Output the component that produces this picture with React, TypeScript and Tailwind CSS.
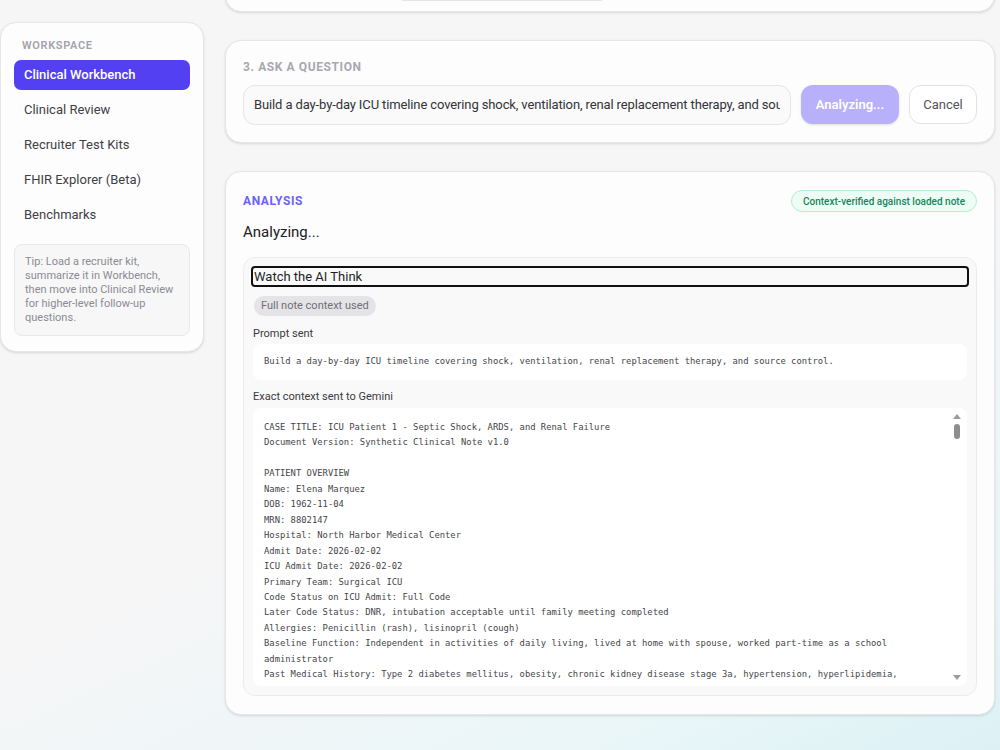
import React from 'react';

const navItems = ['Clinical Workbench', 'Clinical Review', 'Recruiter Test Kits', 'FHIR Explorer (Beta)', 'Benchmarks'];

const contextNote = `CASE TITLE: ICU Patient 1 - Septic Shock, ARDS, and Renal Failure
Document Version: Synthetic Clinical Note v1.0

PATIENT OVERVIEW
Name: Elena Marquez
DOB: 1962-11-04
MRN: 8802147
Hospital: North Harbor Medical Center
Admit Date: 2026-02-02
ICU Admit Date: 2026-02-02
Primary Team: Surgical ICU
Code Status on ICU Admit: Full Code
Later Code Status: DNR, intubation acceptable until family meeting completed
Allergies: Penicillin (rash), lisinopril (cough)
Baseline Function: Independent in activities of daily living, lived at home with spouse, worked part-time as a school administrator
Past Medical History: Type 2 diabetes mellitus, obesity, chronic kidney disease stage 3a, hypertension, hyperlipidemia,
obstructive sleep apnea on CPAP, cholecystectomy (2011)
Home Medications: Metformin 1000 mg BID, amlodipine 10 mg daily, atorvastatin 40 mg nightly

HOSPITAL COURSE
Day 1: Presented with fever, hypotension and confusion after 3 days of abdominal pain.
Day 2: Escalating vasopressor requirement, intubated for hypoxemic respiratory failure.`;

const mono = { fontFamily: '"DejaVu Sans Mono", "Liberation Mono", monospace' };

const Sidebar = () => {
  return (
    <aside className="mt-[22px] w-[204px] shrink-0 self-start rounded-[16px] border border-[#e6e6e8] bg-[#fdfdfd] px-[13px] pb-[15px] pt-[16px] shadow-sm">
      <div className="px-[8px] text-[11px] font-semibold uppercase leading-[13px] tracking-[0.06em] text-[#a3a3ab]">Workspace</div>
      <nav className="mt-[8px] flex flex-col gap-[5px]">
        {navItems.map((item, i) => (
          <div
            key={item}
            className={
              i === 0
                ? 'flex h-[30px] items-center rounded-[7px] bg-[#5240f2] px-[10px] text-[13px] font-medium text-white'
                : 'flex h-[30px] items-center rounded-[7px] px-[10px] text-[13px] text-[#3f3f46]'
            }
          >
            {item}
          </div>
        ))}
      </nav>
      <div className="mt-[14px] rounded-[8px] border border-[#e8e8ea] bg-[#f7f7f8] px-[10px] py-[10px] text-[11px] leading-[14px] text-[#8b8b92]">
        Tip: Load a recruiter kit, summarize it in Workbench, then move into Clinical Review for higher-level follow-up questions.
      </div>
    </aside>
  );
};

const Card = ({ className, children }: { className?: string; children: React.ReactNode }) => (
  <section className={`rounded-[16px] border border-[#e6e6e8] bg-[#fdfdfd] shadow-sm ${className ?? ''}`}>{children}</section>
);

// thin scrollbar look drawn over the context box
const FakeScrollbar = () => (
  <div className="pointer-events-none absolute bottom-[6px] right-[5px] top-[6px] flex w-[10px] flex-col items-center">
    <div className="h-0 w-0 border-x-[4px] border-b-[5px] border-x-transparent border-b-[#9c9c9c]" />
    <div className="mt-[5px] h-[15px] w-[6px] rounded-full bg-[#8e8e8e]" />
    <div className="flex-1" />
    <div className="h-0 w-0 border-x-[4px] border-t-[5px] border-x-transparent border-t-[#9c9c9c]" />
  </div>
);

export default function App() {
  return (
    <div
      className="flex h-[750px] gap-[21px] overflow-hidden bg-[linear-gradient(155deg,#f6f6f7_0%,#f6f6f7_55%,#e9f6f8_85%,#dcf1f5_100%)] pr-[5px] text-[#27272a]"
      style={{ fontFamily: 'Roboto, "Liberation Sans", sans-serif' }}
    >
      <Sidebar />

      <main className="flex min-w-0 flex-1 flex-col gap-[28px]">
        {/* previous step, scrolled mostly out of view */}
        <Card className="-mt-[40px] px-[18px] pb-[10px] pt-[10px]">
          <div className="flex h-[30px]">
            <div className="ml-[154px] flex w-[208px] items-end rounded-[6px] border-b border-[#e2e4e8]">
              <div className="ml-[82px] h-[2px] w-[42px] bg-[#3b82f6]" />
            </div>
          </div>
        </Card>

        <Card className="px-[17px] pb-[17px] pt-[18px]">
          <div className="text-[12px] font-bold uppercase leading-[16px] tracking-[0.05em] text-[#a8a8b0]">3. Ask a question</div>
          <div className="mt-[10px] flex gap-[10px]">
            <div className="flex h-[40px] min-w-0 flex-1 items-center rounded-[12px] border border-[#e4e4e7] bg-[#fafafa] px-[10px] text-[13px] tracking-[-0.12px] text-[#333338]">
              <span className="min-w-0 overflow-hidden whitespace-nowrap">
                Build a day-by-day ICU timeline covering shock, ventilation, renal replacement therapy, and source control.
              </span>
            </div>
            <button className="h-[39px] w-[98px] rounded-[12px] bg-[#b8b0fa] text-[13px] font-semibold text-white shadow-sm">Analyzing...</button>
            <button className="h-[39px] w-[68px] rounded-[12px] border border-[#e2e2e6] bg-white text-[13px] text-[#52525b]">Cancel</button>
          </div>
        </Card>

        <Card className="px-[17px] pb-[18px] pt-[18px]">
          <div className="flex items-center justify-between">
            <div className="text-[12px] font-bold uppercase tracking-[0.05em] text-[#6b62f4]">Analysis</div>
            <div className="flex h-[22px] items-center rounded-full border border-[#b4eed3] bg-[#edfdf5] px-[11px] text-[10px] font-medium text-[#14865c]">
              Context-verified against loaded note
            </div>
          </div>
          <div className="mt-[10px] text-[15px] leading-[20px] text-[#202024]">Analyzing...</div>

          <div className="mt-[15px] rounded-[12px] border border-[#ececee] bg-[#f9f9fa] p-[9px]">
            <div className="mt-[1px] flex h-[17px] items-center rounded-[2px] px-[1px] text-[13px] text-[#1f1f23] outline-2 outline-[#111]">
              Watch the AI Think
            </div>
            <div className="ml-[1px] mt-[11px] inline-flex h-[20px] items-center rounded-full bg-[#e4e4e7] px-[7px] text-[11px] text-[#6e6e76]">
              Full note context used
            </div>

            <div className="mt-[11px] text-[11px] leading-[14px] text-[#3a3a40]">Prompt sent</div>
            <div className="mt-[3px] flex h-[36px] items-center rounded-[8px] bg-white px-[11px] text-[8.85px] text-[#454549]" style={mono}>
              Build a day-by-day ICU timeline covering shock, ventilation, renal replacement therapy, and source control.
            </div>

            <div className="mt-[10px] text-[11px] leading-[14px] text-[#3a3a40]">Exact context sent to Gemini</div>
            <div className="relative mt-[4px] h-[278px] overflow-hidden rounded-[8px] bg-white pt-[10px]">
              <div className="h-[266px] overflow-hidden whitespace-pre-wrap pl-[11px] pr-[24px] pt-[2px] text-[8.85px] leading-[15.45px] text-[#454549]" style={mono}>
                {contextNote}
              </div>
              <FakeScrollbar />
            </div>
          </div>
        </Card>
      </main>
    </div>
  );
}
